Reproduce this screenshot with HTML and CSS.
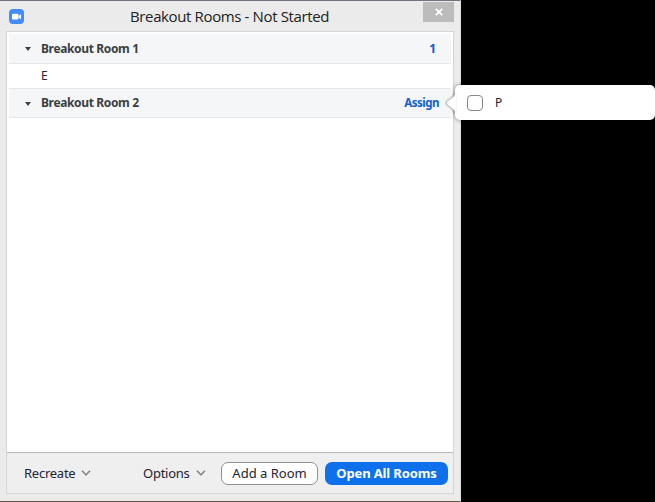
FILE: index.html
```html
<!DOCTYPE html>
<html lang="en">
<head>
<meta charset="utf-8">
<title>Breakout Rooms</title>
<link rel="stylesheet" href="styles.css">
</head>
<body>
<main class="window">
  <header class="titlebar">
    <svg class="logo" width="15" height="15" viewBox="0 0 15 15"><rect width="15" height="15" rx="4" fill="#438cf8"/><rect x="3" y="4.800" width="6.5" height="5.700" rx="1.3" fill="#fff"/><path d="M9.7 7 12 5v5.400L9.7 8.5z" fill="#fff"/></svg>
    <h1 class="title">Breakout Rooms - Not Started</h1>
    <button class="close" aria-label="Close"><svg width="8" height="8" viewBox="0 0 8 8"><path d="M.8.8 7.2 7.2M7.2.8.8 7.2" stroke="#fff" stroke-width="1.7"/></svg></button>
  </header>
  <section class="panel">
    <div class="rooms">
      <div class="room"><svg class="arrow" width="6" height="4" viewBox="0 0 6 4"><path d="M0 0h6L3 4z" fill="#3b3e43"/></svg><span class="name">Breakout Room 1</span><span class="count">1</span></div>
      <div class="member">E</div>
      <div class="room last"><svg class="arrow" width="6" height="4" viewBox="0 0 6 4"><path d="M0 0h6L3 4z" fill="#3b3e43"/></svg><span class="name">Breakout Room 2</span><a class="assign">Assign</a></div>
    </div>
    <footer class="footer">
      <button class="menu recreate"><span>Recreate</span><svg width="10" height="6" viewBox="0 0 10 6"><path d="m1 .8 4 4 4-4" fill="none" stroke="#85858f" stroke-width="1.6"/></svg></button>
      <button class="menu options"><span>Options</span><svg width="10" height="6" viewBox="0 0 10 6"><path d="m1 .8 4 4 4-4" fill="none" stroke="#85858f" stroke-width="1.6"/></svg></button>
      <button class="button add"><span>Add a Room</span></button>
      <button class="button open"><span>Open All Rooms</span></button>
    </footer>
  </section>
</main>
<aside class="popover">
  <svg class="pointer" width="10" height="24" viewBox="0 0 10 24"><path d="M10 0v24C9 19 7 17.500 1.500 13.500Q0 12 1.500 10.500C7 6.500 9 5 10 0z" fill="#fff"/></svg>
  <span class="checkbox"></span><span class="person">P</span>
</aside>
</body>
</html>
```
FILE: styles.css
```css
* { box-sizing: border-box; }
body {
  margin: 0;
  height: 502px;
  overflow: hidden;
  background: #000;
  color: #232333;
  font: 13px/18px "Noto Sans", "Open Sans", sans-serif;
}
button {
  margin: 0;
  padding: 0;
  border: 0;
  background: none;
  color: inherit;
  font: inherit;
  white-space: nowrap;
}
svg { display: block; flex: none; }
.window {
  display: flex;
  flex-direction: column;
  width: 461px;
  height: 502px;
  padding-bottom: 7px;
  background: #ebebeb;
  border-top: 1px solid #77717f;
  border-right: 1px solid #dedede;
  border-bottom: 1px solid #65583f;
}
.titlebar {
  display: flex;
  height: 30px;
  flex: none;
}
.logo { margin: 8px 0 0 9px; }
.title {
  width: 293px;
  margin: 4px 0 0 106px;
  font: 400 15px/22px "Open Sans", sans-serif;
  letter-spacing: -.37px;
  color: #222;
  white-space: nowrap;
}
.close {
  display: flex;
  align-items: center;
  justify-content: center;
  width: 31px;
  height: 20px;
  margin-top: 1px;
  background: #bcbcbc;
}
.panel {
  display: flex;
  flex-direction: column;
  flex: 1;
  width: 448px;
  margin-left: 6px;
  border: 1px solid #d5d5d5;
  background: #fff;
}
.rooms { flex: 1; padding: 2px 2px 0; }
.room {
  display: flex;
  align-items: center;
  height: 30px;
  padding: 0 12px 0 16px;
  background: #f4f6f8;
  border-bottom: 1px solid #e4e7eb;
  font-size: 12px;
  font-weight: 700;
  color: #3b3e43;
}
.last { height: 29px; }
.arrow { margin: 1px 10px 0 0; }
.name { letter-spacing: -.36px; flex: 1; }
.count { color: #0e56e0; margin-right: 3px; }
.assign { color: #0e61d0; font-size: 11.5px; letter-spacing: -.5px; }
.member {
  height: 25px;
  padding: 3px 32px;
  font-size: 12px;
  border-bottom: 1px solid #e4e7eb;
}
.footer {
  display: flex;
  align-items: center;
  height: 41px;
  padding: 0 5px 0 17px;
  background: #efefef;
  border-top: 1px solid #b9b9b9;
}
.menu {
  display: flex;
  align-items: center;
  gap: 6px;
  letter-spacing: -.25px;
}
.recreate { width: 119px; }
.options { width: 78px; }
.button {
  height: 23px;
  border-radius: 7px;
}
.add {
  width: 97px;
  border: 1px solid #909096;
  background: #fff;
}
.open {
  width: 123px;
  margin-left: 7px;
  background: #0e71eb;
  color: #fff;
  font-weight: 700;
  letter-spacing: -.12px;
}
.popover {
  position: absolute;
  top: 85px;
  left: 455px;
  display: flex;
  align-items: center;
  width: 200px;
  height: 35px;
  padding-left: 12px;
  border-radius: 5px;
  background: #fff;
  box-shadow: 0 0 4px #0007;
  font-size: 12px;
}
.pointer {
  position: absolute;
  left: -9px;
  top: 6px;
  filter: drop-shadow(-1px 0 1px #0006);
}
.checkbox {
  width: 16px;
  height: 16px;
  margin-right: 12px;
  border: 1px solid #85858c;
  border-radius: 4px;
}
```
